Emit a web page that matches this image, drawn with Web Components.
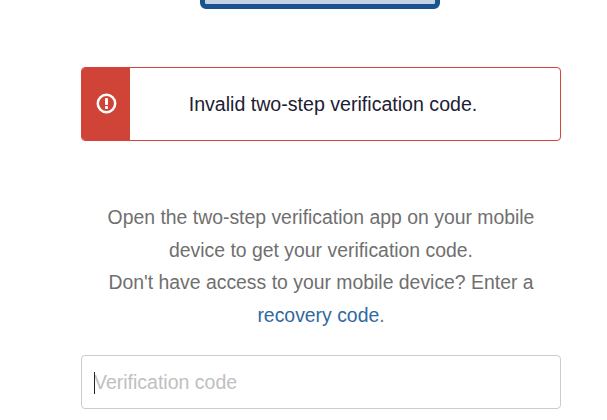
<!DOCTYPE html>
<html lang="en">
<head>
<meta charset="utf-8">
<title>Two-step verification</title>
<style>
  html, body { margin: 0; padding: 0; background: #fff; }
  body { height: 420px; overflow: hidden; font-family: "Liberation Sans", Arial, sans-serif; }
</style>
</head>
<body>
<verify-page>
  <top-button></top-button>
  <error-alert>Invalid two-step verification code.</error-alert>
  <help-text>
    Open the two-step verification app on your mobile device to get your verification code.<br>
    Don't have access to your mobile device? Enter a <a href="#" style="color:#31689f;text-decoration:none">recovery code</a>.
  </help-text>
  <code-input placeholder="Verification code"></code-input>
</verify-page>

<script>
class VerifyPage extends HTMLElement {
    constructor() {
        super();
        const shadow = this.attachShadow({ mode: 'open' });
        shadow.innerHTML = `
            <style>
                :host {
                    display: flex;
                    flex-direction: column;
                    align-items: flex-start;
                    width: 607px;
                    box-sizing: border-box;
                    padding-left: 81px;
                }
            </style>
            <slot></slot>
        `;
    }
}

// the button is scrolled mostly out of view, only its bottom edge shows
class TopButton extends HTMLElement {
    constructor() {
        super();
        const shadow = this.attachShadow({ mode: 'open' });
        shadow.innerHTML = `
            <style>
                :host {
                    display: block;
                    box-sizing: border-box;
                    width: 240px;
                    height: 49px;
                    margin-top: -40px;
                    margin-bottom: 58px;
                    margin-left: 119px;
                    background: #c6d3e2;
                    border: 5px solid #19548f;
                    border-radius: 6px;
                }
            </style>
        `;
    }
}

class ErrorAlert extends HTMLElement {
    constructor() {
        super();
        const shadow = this.attachShadow({ mode: 'open' });
        shadow.innerHTML = `
            <style>
                :host {
                    display: flex;
                    box-sizing: border-box;
                    width: 480px;
                    height: 74px;
                    margin-bottom: 60px;
                    border: 1px solid #d34537;
                    border-radius: 4px;
                    overflow: hidden;
                    background: #fff;
                }
                .side {
                    flex: 0 0 48px;
                    display: flex;
                    align-items: center;
                    justify-content: center;
                    background: #d04437;
                    padding-bottom: 1px;
                }
                .msg {
                    flex: 1;
                    display: flex;
                    align-items: center;
                    justify-content: center;
                    font-size: 19.6px;
                    color: #1d2033;
                    padding-right: 24px;
                }
            </style>
            <div class="side">
                <svg width="21" height="21" viewBox="0 0 20 20">
                    <circle cx="10" cy="10" r="8.3" fill="none" stroke="#fff" stroke-width="2.4"/>
                    <rect x="8.6" y="4.8" width="2.8" height="6.6" rx="0.8" fill="#fff"/>
                    <rect x="8.6" y="12.4" width="2.8" height="2.8" rx="0.8" fill="#fff"/>
                </svg>
            </div>
            <div class="msg"><slot></slot></div>
        `;
    }
}

class HelpText extends HTMLElement {
    constructor() {
        super();
        const shadow = this.attachShadow({ mode: 'open' });
        shadow.innerHTML = `
            <style>
                :host {
                    display: block;
                    box-sizing: border-box;
                    width: 480px;
                    padding: 0 20px;
                    margin-bottom: 24px;
                    font-size: 19.4px;
                    line-height: 32.6px;
                    color: #6f6f6f;
                    text-align: center;
                }
            </style>
            <slot></slot>
        `;
    }
}

class CodeInput extends HTMLElement {
    constructor() {
        super();
        const shadow = this.attachShadow({ mode: 'open' });
        shadow.innerHTML = `
            <style>
                :host {
                    display: flex;
                    align-items: center;
                    box-sizing: border-box;
                    width: 480px;
                    height: 54px;
                    padding-left: 12px;
                    border: 1px solid #cccccc;
                    border-radius: 4px;
                    font-size: 19.5px;
                    color: #c0c0c0;
                    position: relative;
                }
                .caret {
                    position: absolute;
                    left: 12px;
                    top: 16px;
                    width: 1px;
                    height: 22px;
                    background: #222;
                }
            </style>
            <span class="caret"></span>
            <span>${this.getAttribute('placeholder')}</span>
        `;
    }
}

customElements.define('verify-page', VerifyPage);
customElements.define('top-button', TopButton);
customElements.define('error-alert', ErrorAlert);
customElements.define('help-text', HelpText);
customElements.define('code-input', CodeInput);
</script>
</body>
</html>
